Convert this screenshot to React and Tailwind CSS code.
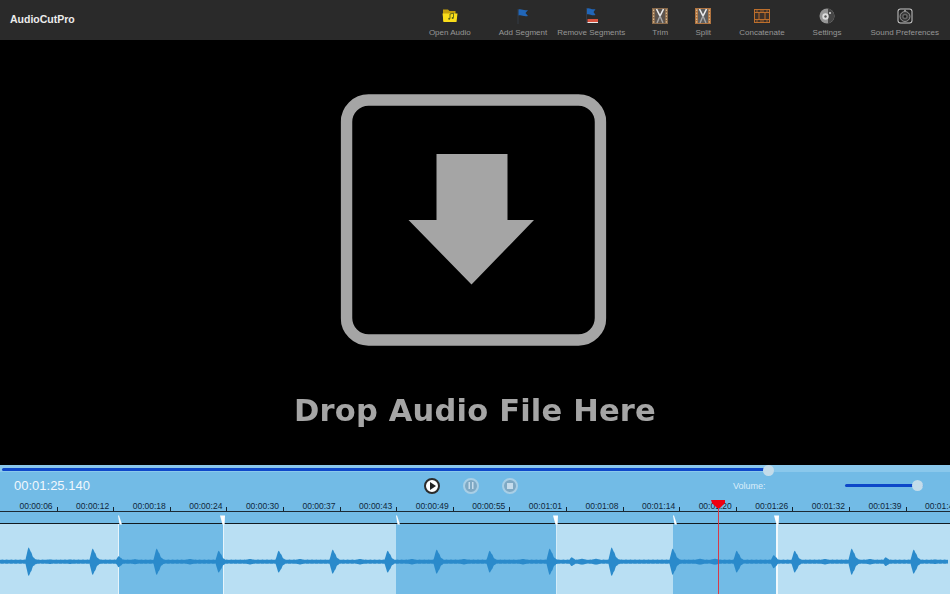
const SANS = "font-['Liberation_Sans',Arial,sans-serif]";

const labels = ["00:00:06","00:00:12","00:00:18","00:00:24","00:00:30","00:00:37","00:00:43","00:00:49","00:00:55","00:01:01","00:01:08","00:01:14","00:01:20","00:01:26","00:01:32","00:01:39","00:01:45"];

const spikes = [[28,13],[92,12],[118,5],[156,12],[218,10],[278,10],[332,11],[387,10],[436,11],[489,10],[549,12],[571,4],[611,13],[672,12],[736,10],[773,6],[794,10],[851,12],[885,4],[913,11]];
const bumps = [[50,2.4],[70,2.4],[135,2.6],[190,2.8],[250,2.8],[300,2.8],[360,2.8],[412,2.8],[464,2.8],[523,2.8],[582,3],[596,3],[700,3],[715,3],[825,2.8],[870,2.8],[935,2.4]];

function envelope(x) {
  if (x > 948) return 0;
  let a = 1.8 + 0.3 * Math.abs(Math.sin(x * 0.7));
  for (const [s, h] of spikes) {
    const d = x - s;
    if (d >= -2 && d < 0) a = Math.max(a, h * (1 + d / 3));
    if (d >= 0) {
      const v = h * Math.exp(-Math.max(0, d - 2) / 3.2) * (1 + 0.1 * Math.sin(d * 2.2));
      const tail = (h / 2.2) * Math.exp(-d / 9);
      a = Math.max(a, v, tail);
    }
  }
  for (const [s, h] of bumps) {
    const d = Math.abs(x - s);
    if (d < 6) a = Math.max(a, h * (1 - d / 14));
  }
  return a;
}

function wavePath() {
  const top = [];
  const bottom = [];
  for (let x = 0; x <= 948; x += 0.5) {
    const a = envelope(x);
    top.push(`${x},${(37.7 - a).toFixed(2)}`);
    bottom.unshift(`${x},${(37.7 + a).toFixed(2)}`);
  }
  return `M${top.join("L")}L${bottom.join("L")}Z`;
}

function Film({ color, inner, children }) {
  return (
    <svg width="16" height="16" viewBox="0 0 16 16" className="blur-[0.4px]">
      <rect x="0" y="0" width="16" height="16" fill={color} />
      <rect x="3" y="1" width="10" height="14" fill={inner} />
      {[1.5, 4.5, 7.5, 10.5, 13.2].map((y) => (
        <g key={y} fill="#d8b88c">
          <rect x="1" y={y} width="1.2" height="1.5" />
          <rect x="13.8" y={y} width="1.2" height="1.5" />
        </g>
      ))}
      {children}
    </svg>
  );
}

const Scissors = () => (
  <g fill="none">
    <path d="M4.5 1 L8 8 L11.5 1" stroke="#ececec" strokeWidth="1.6" />
    <path d="M8 8 L5 15 M8 8 L11 15" stroke="#a8a8a8" strokeWidth="1.4" />
  </g>
);

const icons = {
  open: (
    <svg width="16" height="14" viewBox="0 0 16 14" className="blur-[0.4px]">
      <path d="M1 0.500 H6 L7.500 2 H13.500 V12.500 H2 Q1 12.500 1 11.500 Z" fill="#c4a00c" />
      <path d="M0.500 4.500 H15.500 L14.500 13 H1.500 Z" fill="#f9dd1a" />
      <path d="M8 9.500 V5 L11.500 4.200 V8.700" stroke="#55601a" strokeWidth="0.9" fill="none" />
      <circle cx="7.200" cy="9.700" r="1" fill="#55601a" />
      <circle cx="10.700" cy="8.900" r="1" fill="#55601a" />
    </svg>
  ),
  add: (
    <svg width="14" height="16" viewBox="0 0 14 16" className="blur-[0.4px]">
      <rect x="1.500" y="1" width="1" height="15" fill="#333a44" />
      <path d="M2.500 1.500 C6 0.500 7 3 12 2 L9.500 5 L12 8 C7 9 6 6.500 2.500 7.500 Z" fill="#2166b8" />
    </svg>
  ),
  remove: (
    <svg width="13" height="16" viewBox="0 0 13 16" className="blur-[0.4px]">
      <rect x="1" y="0" width="1" height="15" fill="#333a44" />
      <path d="M2 0.500 C5 -0.300 6 2 10.500 1.200 L8.500 4 L10.500 7 C6 7.800 5 5.500 2 6.300 Z" fill="#2166b8" />
      <rect x="2.500" y="11" width="10.500" height="3" fill="#d9533f" />
      <rect x="2.500" y="14" width="10.500" height="1" fill="#ececec" />
    </svg>
  ),
  trim: (
    <Film color="#8a6a4a" inner="#5c544e">
      <Scissors />
    </Film>
  ),
  split: (
    <Film color="#b0733f" inner="#5c5c5c">
      <Scissors />
    </Film>
  ),
  concat: (
    <svg width="16" height="14" viewBox="0 0 16 14" className="blur-[0.4px]">
      <rect x="0.500" y="0.500" width="15" height="13" fill="#3e3129" stroke="#bd6f2c" strokeWidth="1" />
      <path d="M0.500 3.500 H15.500 M0.500 10.500 H15.500 M5 3.500 V10.500 M11 3.500 V10.500" stroke="#bd6f2c" strokeWidth="1" />
      <path d="M3 1 V3.500 M7 1 V3.500 M9 1 V3.500 M13 1 V3.500 M3 10.500 V13 M7 10.500 V13 M9 10.500 V13 M13 10.500 V13" stroke="#bd6f2c" strokeWidth="0.8" />
    </svg>
  ),
  settings: (
    <svg width="16" height="16" viewBox="0 0 16 16" className="blur-[0.4px]">
      <circle cx="8" cy="8" r="7.500" fill="#969696" />
      <path d="M9 0.600 A7.500 7.500 0 0 1 9 15.400 Z" fill="#454545" />
      <circle cx="6.500" cy="8.500" r="3.200" fill="#dcdcdc" />
      <circle cx="6.500" cy="8.500" r="1.200" fill="#555" />
      <circle cx="11" cy="5" r="1.100" fill="#cfcfcf" />
    </svg>
  ),
  sound: (
    <svg width="16" height="16" viewBox="0 0 16 16" className="blur-[0.3px]">
      <rect x="0.500" y="0.500" width="15" height="15" rx="3" fill="#c8c8c8" />
      <rect x="1.500" y="1.500" width="13" height="13" rx="2" fill="#222" />
      <circle cx="8" cy="8.500" r="5" fill="#3a3a3a" stroke="#bdbdbd" strokeWidth="0.7" />
      <circle cx="8" cy="8.500" r="2.800" fill="#666" />
      <circle cx="8" cy="8.500" r="1.300" fill="#161616" />
      <circle cx="8" cy="2.500" r="0.700" fill="#ddd" />
    </svg>
  ),
};

const tools = [
  ["open", "Open Audio", "mr-[1px]"],
  ["add", "Add Segment", ""],
  ["remove", "Remove Segments", "-ml-[17px]"],
  ["trim", "Trim", ""],
  ["split", "Split", ""],
  ["concat", "Concatenate", "ml-[1px]"],
  ["settings", "Settings", "ml-[1px]"],
  ["sound", "Sound Preferences", "ml-[2px]"],
];

function RoundButton({ children, active }) {
  return (
    <button
      className={
        active
          ? "flex h-[16px] w-[16px] items-center justify-center rounded-full border-2 border-[#2b2b2b] bg-white"
          : "flex h-[16px] w-[16px] items-center justify-center rounded-full border-2 border-[#a9cfe6] bg-[#7fa9c4]"
      }
    >
      {children}
    </button>
  );
}

function Marker({ left, end }) {
  return (
    <svg width="6" height="10" viewBox="0 0 6 10" className="absolute top-[514.500px]" style={{ left }}>
      <path d={end ? "M0 0.500 H5 L4.600 9.500 H2.500 Z" : "M1 0.500 H2 L5 9.500 H2.500 Z"} fill="#ffffff" />
    </svg>
  );
}

export default function App() {
  return (
    <div className={`relative flex h-[594px] w-[950px] flex-col overflow-hidden bg-black ${SANS}`}>
      <header className="flex h-[40px] shrink-0 items-start justify-between bg-[#2a2a2a] pl-[10px] pr-[11px]">
        <div className="mt-[12px] text-[10.500px] leading-[14px] font-bold text-[#ececec]">AudioCutPro</div>
        <nav className="flex items-start gap-[27px]">
          {tools.map(([key, label, cls]) => (
            <div key={key} className={`flex flex-col items-center ${cls}`}>
              <div className="mt-[8px] flex h-[16px] items-center justify-center">{icons[key]}</div>
              <div className="mt-[4px] text-[8px] leading-[10px] whitespace-nowrap text-[#979797]">{label}</div>
            </div>
          ))}
        </nav>
      </header>

      <main className="flex h-[425px] shrink-0 flex-col items-center bg-black">
        <svg width="266" height="252" viewBox="0 0 266 252" className="mt-[54px] -translate-x-[1.500px] blur-[0.4px]">
          <rect x="6" y="6" width="254" height="240" rx="22" fill="none" stroke="#a5a5a5" strokeWidth="11.500" />
          <path d="M96 60 H167 V126 H193.500 L131 190.500 L68 126 H96 Z" fill="#a5a5a5" />
        </svg>
        <div className="mt-[45px] font-['DejaVu_Sans',Verdana,sans-serif] text-[30.500px] leading-[40px] font-bold tracking-[0.2px] whitespace-nowrap text-[#a5a5a5] blur-[0.4px]">
          Drop Audio File Here
        </div>
      </main>

      <section className="flex h-[129px] shrink-0 flex-col bg-[#72bbe6]">
        <div className="relative h-[7px] shrink-0 bg-[#8ac8ec]">
          <div className="absolute top-[3px] left-[2px] h-[3px] w-[766px] rounded-full bg-[#0d47c9]" />
          <div className="absolute top-0 left-[763px] h-[11px] w-[11px] rounded-full bg-[#c4dcea]" />
        </div>

        <div className="flex h-[27px] shrink-0 items-center">
          <div className="ml-[14px] w-[410px] pt-[1px] text-[13px] leading-[18px] text-[#f1f8fd]">00:01:25.140</div>
          <div className="flex items-center gap-[23px]">
            <RoundButton active>
              <svg width="7" height="8" viewBox="0 0 7 8"><path d="M1 0 L7 4 L1 8 Z" fill="#222" /></svg>
            </RoundButton>
            <RoundButton>
              <svg width="6" height="7" viewBox="0 0 6 7"><path d="M0.500 0 H2 V7 H0.500 Z M4 0 H5.500 V7 H4 Z" fill="#c6dcec" /></svg>
            </RoundButton>
            <RoundButton>
              <div className="h-[6px] w-[6px] bg-[#c6dcec]" />
            </RoundButton>
          </div>
          <div className="ml-[215px] w-[112px] text-[9px] leading-[12px] text-[#dceefa]">Volume:</div>
          <div className="relative h-[3px] w-[78px] rounded-full bg-[#0d47c9]">
            <div className="absolute -top-[4px] right-0 h-[11px] w-[11px] rounded-full bg-[#c4dcea]" />
          </div>
        </div>

        <div className="flex h-[13px] shrink-0 items-end border-b border-[#1b2a35] pl-[1px]">
          {labels.map((l) => (
            <div key={l} className="flex h-[12px] w-[56.600px] shrink-0 items-end justify-end">
              <span className="text-[8.500px] leading-[10px] whitespace-nowrap text-[#10283c]">{l}</span>
              <span className="ml-[4px] h-[4px] w-px shrink-0 bg-[#16242f]" />
            </div>
          ))}
        </div>

        <div className="h-[12px] shrink-0 border-b-[1.500px] border-[#111a20]" />

        <div className="relative flex h-[70px] shrink-0">
          <div className="w-[118px] bg-[#b9dff3]" />
          <div className="w-[106px] border-x border-[#e6f4fb] bg-[#72bbe6]" />
          <div className="w-[172px] bg-[#b9dff3]" />
          <div className="w-[161px] border-r border-[#d4ecf8] bg-[#72bbe6]" />
          <div className="w-[116px] bg-[#b9dff3]" />
          <div className="w-[105px] border-r-2 border-[#f0f8fc] bg-[#72bbe6]" />
          <div className="flex-1 bg-[#b9dff3]" />
          <svg width="950" height="70" viewBox="0 0 950 70" className="absolute top-0 left-0 blur-[0.3px]">
            <path d={wavePath()} fill="#2a8acb" />
          </svg>
        </div>
      </section>

      <Marker left={117} />
      <Marker left={220} end />
      <Marker left={395} />
      <Marker left={553} end />
      <Marker left={672} />
      <Marker left={774} end />

      <div className="absolute top-[500px] left-[718px] h-[94px] w-px bg-[#d63a4a]" />
      <svg width="16" height="9" viewBox="0 0 16 9" className="absolute top-[500px] left-[711px]">
        <path d="M0 0 H14 V3 L9 8 H6 L1 3 Z" fill="#f00010" />
      </svg>
    </div>
  );
}
